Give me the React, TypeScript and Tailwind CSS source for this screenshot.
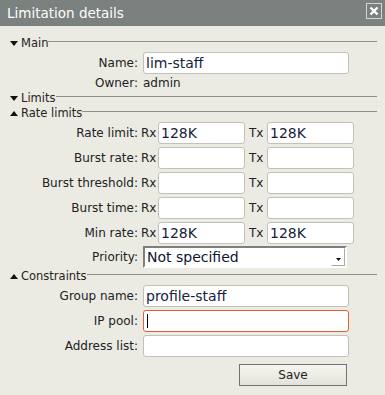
import React from "react";

const font = { fontFamily: '"DejaVu Sans", sans-serif' };

function Arrow({ up }: { up?: boolean }) {
  return (
    <svg width="8" height="5" viewBox="0 0 8 5" className="shrink-0">
      {up ? <polygon points="0,5 8,5 4,0" fill="#111" /> : <polygon points="0,0 8,0 4,5" fill="#111" />}
    </svg>
  );
}

function Header({ title, up, h = "h-[16px]" }: { title: string; up?: boolean; h?: string }) {
  return (
    <div className={`flex items-start pl-[10px] pr-[8px] ${h}`}>
      <div className="mt-[6px]">
        <Arrow up={up} />
      </div>
      <span className="ml-[3px] text-[11.5px] leading-[16px] text-[#2a2220] whitespace-nowrap">{title}</span>
      <div className="flex-1 mt-[6px] border-t border-[#8e8e8a]" />
    </div>
  );
}

function TextBox({ value, w, focus }: { value?: string; w: string; focus?: boolean }) {
  return (
    <div
      className={`h-[22px] ${w} rounded-[3px] border bg-white pl-[2px] flex items-center text-[14px] text-[#15223a] ${
        focus ? "border-[#e06232]" : "border-[#c4c0b8]"
      }`}
    >
      {value}
      {focus && <span className="ml-[1px] h-[14px] w-px bg-black" />}
    </div>
  );
}

function Label({ children }: { children: React.ReactNode }) {
  return <div className="w-[138px] shrink-0 text-right text-[12px] text-[#222]">{children}</div>;
}

function FieldRow({ label, value, focus, mt }: { label: string; value?: string; focus?: boolean; mt: string }) {
  return (
    <div className={`flex items-center ${mt}`}>
      <Label>{label}</Label>
      <div className="ml-[5px]">
        <TextBox value={value} w="w-[206px]" focus={focus} />
      </div>
    </div>
  );
}

function RateRow({ label, rx, tx, mt }: { label: string; rx?: string; tx?: string; mt: string }) {
  return (
    <div className={`flex items-center ${mt}`}>
      <Label>{label}</Label>
      <span className="ml-[3px] w-[17px] text-[12px] text-[#222]">Rx</span>
      <TextBox value={rx} w="w-[87px]" />
      <span className="ml-[4px] w-[18px] text-[12px] text-[#222]">Tx</span>
      <TextBox value={tx} w="w-[87px]" />
    </div>
  );
}

export default function App() {
  return (
    <div className="w-[385px] h-[395px] bg-[#ebebe4] overflow-hidden" style={font}>
      <div className="h-[26px] bg-[#7a817f] flex items-center justify-between pl-[7px] pr-[3px]">
        <span className="text-[13.5px] text-white">Limitation details</span>
        <div className="w-[16px] h-[16px] border border-[#d2d5d3] flex items-center justify-center mb-[4px]">
          <svg width="10" height="10" viewBox="0 0 10 10">
            <path d="M1.5 1.5 L8.5 8.5 M8.5 1.5 L1.5 8.5" stroke="#fff" strokeWidth="2.4" />
          </svg>
        </div>
      </div>

      <div className="pt-[9px]">
        <Header title="Main" />
        <FieldRow label="Name:" value="lim-staff" mt="mt-[1px]" />
        <div className="flex mt-[2px] h-[14px] items-center">
          <Label>Owner:</Label>
          <span className="ml-[5px] text-[12px] text-[#222]">admin</span>
        </div>

        <Header title="Limits" h="h-[15px]" />
        <Header title="Rate limits" up />
        <RateRow label="Rate limit:" rx="128K" tx="128K" mt="mt-[1px]" />
        <RateRow label="Burst rate:" mt="mt-[3px]" />
        <RateRow label="Burst threshold:" mt="mt-[3px]" />
        <RateRow label="Burst time:" mt="mt-[3px]" />
        <RateRow label="Min rate:" rx="128K" tx="128K" mt="mt-[3px]" />

        <div className="flex items-center mt-[2px]">
          <Label>Priority:</Label>
          <div className="ml-[5px] h-[22px] w-[204px] border-2 border-t-[#7e7e7e] border-l-[#7e7e7e] border-b-white border-r-white bg-white flex items-center">
            <span className="flex-1 pl-[2px] text-[14px] text-[#0d1530]">Not specified</span>
            <div className="h-full w-[14px] border-l border-t border-l-white border-t-white border-r border-b border-r-[#a8a8a4] border-b-[#a8a8a4] bg-white flex items-end justify-center pb-[4px]">
              <svg width="5" height="3" viewBox="0 0 5 3">
                <polygon points="0,0 5,0 2.5,3" fill="#111" />
              </svg>
            </div>
          </div>
        </div>

        <Header title="Constraints" up />
        <FieldRow label="Group name:" value="profile-staff" mt="mt-[1px]" />
        <FieldRow label="IP pool:" focus mt="mt-[3px]" />
        <FieldRow label="Address list:" mt="mt-[3px]" />

        <div className="flex mt-[7px] pl-[239px]">
          <button className="h-[22px] w-[108px] border border-[#6f7572] bg-gradient-to-b from-[#f6f5f0] to-[#e3e2da] text-[12px] text-[#222]">
            Save
          </button>
        </div>
      </div>
    </div>
  );
}
